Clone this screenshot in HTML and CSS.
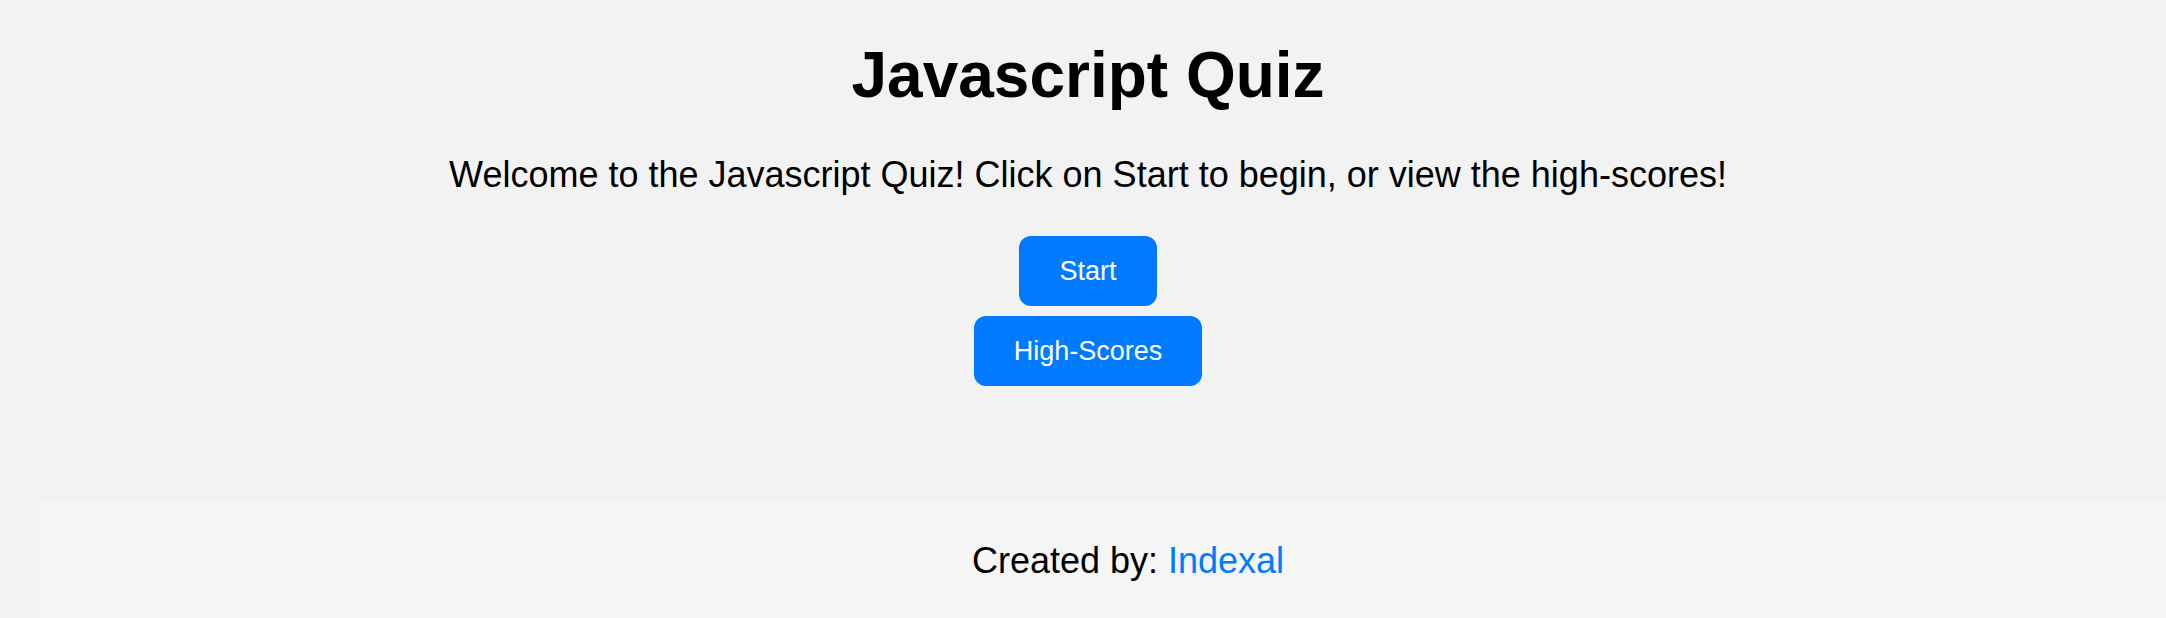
FILE: index.html
```html
<!DOCTYPE html>
<html lang="en">
<head>
<meta charset="utf-8">
<title>Javascript Quiz</title>
<link rel="stylesheet" href="styles.css">
</head>
<body>
<div class="page">
  <main class="intro">
    <h1 class="title">Javascript Quiz</h1>
    <p class="lead">Welcome to the Javascript Quiz! Click on Start to begin, or view the high-scores!</p>
    <div class="actions">
      <button class="btn" type="button">Start</button>
      <button class="btn" type="button">High-Scores</button>
    </div>
  </main>
  <footer class="footer">
    <p class="credit">Created by: <a class="credit-link" href="#">Indexal</a></p>
  </footer>
</div>
</body>
</html>
```
FILE: styles.css
```css
html, body {
  margin: 0;
  padding: 0;
  overflow: hidden;
  background: #f2f2f2;
}

body {
  font-family: "Liberation Sans", Arial, sans-serif;
  color: #000;
  height: 618px;
}

.page {
  width: 2176px;
  display: flex;
  flex-direction: column;
}

.intro {
  display: flex;
  flex-direction: column;
  align-items: center;
  padding-top: 38px;
  height: 500px;
  box-sizing: border-box;
}

.title {
  margin: 0;
  font-size: 64px;
  font-weight: bold;
  line-height: 74px;
}

.lead {
  margin: 42px 0 0;
  font-size: 36px;
  line-height: 41px;
}

.actions {
  display: flex;
  flex-direction: column;
  align-items: center;
  gap: 10px;
  margin-top: 41px;
}

.btn {
  font-family: "Liberation Sans", Arial, sans-serif;
  font-size: 27px;
  line-height: 31px;
  height: 70px;
  padding: 0 40px;
  border: none;
  border-radius: 12px;
  background: #007bff;
  color: #fff;
}

.footer {
  margin-left: 40px;
  width: 2126px;
  padding: 40px 50px 37px 0;
  background: #f5f5f5;
  text-align: center;
}

.credit {
  margin: 0;
  font-size: 36px;
  line-height: 41px;
  padding-left: 50px;
}

.credit-link {
  color: #007bff;
  text-decoration: none;
}
```
